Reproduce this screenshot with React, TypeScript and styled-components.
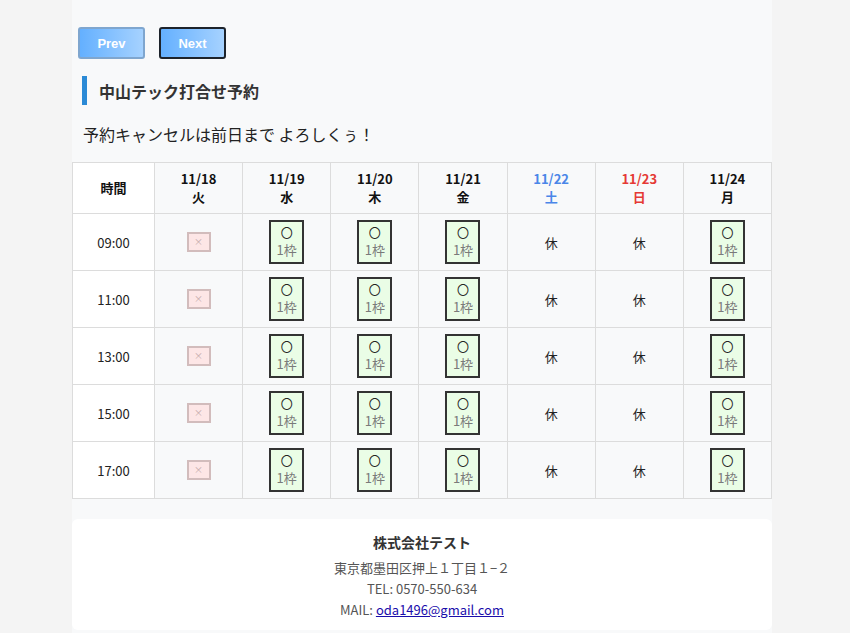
import React from "react"
import styled, { createGlobalStyle } from "styled-components"

const GlobalStyle = createGlobalStyle`
    body {
        margin: 0;
        background: #f4f4f4;
        font-family: "Noto Sans CJK JP", "Noto Sans", sans-serif;
        color: #222;
    }
`;

const Page = styled.div`
    width: 700px;
    margin-left: 72px;
    background: #f8f9fa;
    min-height: 633px;
    box-sizing: border-box;
    padding-top: 27px;
`;

const NavBar = styled.div`
    display: flex;
    gap: 14px;
    padding-left: 6px;
`;

const NavButton = styled.button<{ $active?: boolean }>`
    width: 67px;
    height: 32px;
    box-sizing: border-box;
    border-radius: 3px;
    border: 2px solid ${p => (p.$active ? "#1d232b" : "#7fa6cf")};
    background: linear-gradient(to right, #64b0ff, #a6d2ff);
    color: #fff;
    font-family: "Liberation Sans", Arial, sans-serif;
    font-weight: bold;
    font-size: 13px;
    padding: 0;
`;

const Heading = styled.h2`
    margin: 17px 0 0 10px;
    border-left: 5px solid #2b8ad6;
    padding-left: 12px;
    height: 29px;
    display: flex;
    align-items: center;
    font-size: 16px;
    font-weight: bold;
    color: #333;
`;

const Notice = styled.p`
    margin: 16px 0 0 11px;
    font-size: 16px;
    line-height: 26px;
    color: #222;
`;

const Table = styled.table`
    margin-top: 15px;
    width: 700px;
    border-collapse: collapse;
    table-layout: fixed;
`;

const HeadCell = styled.th<{ $color?: string }>`
    border: 1px solid #dcdcdc;
    height: 50px;
    font-size: 13px;
    line-height: 18px;
    font-weight: bold;
    color: ${p => p.$color || "#111"};
    background: #f8f9fa;
    padding: 0;
`;

const TimeHead = styled(HeadCell)`
    width: 81px;
    background: #fff;
`;

const Cell = styled.td`
    border: 1px solid #dcdcdc;
    height: 56px;
    text-align: center;
    font-size: 13px;
    color: #222;
    background: #f8f9fa;
    padding: 0;
`;

const TimeCell = styled(Cell)`
    background: #fff;
`;

const SlotBox = styled.div`
    width: 35px;
    height: 44px;
    box-sizing: border-box;
    margin: 0 auto;
    border: 2px solid #333;
    background: #eafde6;
    display: flex;
    flex-direction: column;
    align-items: center;
    justify-content: center;
    color: #7a7a7a;
`;

const Circle = styled.span`
    color: #222;
    font-size: 12px;
    line-height: 15px;
`;

const Count = styled.span`
    font-size: 13px;
    line-height: 19px;
`;

const Closed = styled.div`
    width: 24px;
    height: 20px;
    box-sizing: border-box;
    margin: 0 auto;
    border: 2px solid #d2bcbc;
    background: #fde6e6;
    color: #c4a8a8;
    font-size: 9px;
    line-height: 16px;
    text-align: center;
`;

const Footer = styled.footer`
    margin-top: 20px;
    background: #fff;
    border-radius: 6px;
    padding: 13px 0 10px;
    text-align: center;
    color: #555;
    font-size: 13px;
    line-height: 21px;
`;

const Company = styled.div`
    font-weight: bold;
    font-size: 14px;
    color: #333;
    margin-bottom: 4px;
`;

const MailLink = styled.a`
    color: #1a0dab;
`;

const days = [
    { date: "11/18", wd: "火", color: "", type: "full" },
    { date: "11/19", wd: "水", color: "", type: "open" },
    { date: "11/20", wd: "木", color: "", type: "open" },
    { date: "11/21", wd: "金", color: "", type: "open" },
    { date: "11/22", wd: "土", color: "#4a86e8", type: "off" },
    { date: "11/23", wd: "日", color: "#e53935", type: "off" },
    { date: "11/24", wd: "月", color: "", type: "open" },
];

const times = ["09:00", "11:00", "13:00", "15:00", "17:00"];

function Slot({ type }: { type: string }) {
    if (type === "full") return <Closed>×</Closed>;
    if (type === "off") return <>休</>;
    return (
        <SlotBox>
            <Circle>〇</Circle>
            <Count>1枠</Count>
        </SlotBox>
    );
}

export default function App() {
    return (
        <>
            <GlobalStyle />
            <Page>
                <NavBar>
                    <NavButton>Prev</NavButton>
                    <NavButton $active>Next</NavButton>
                </NavBar>
                <Heading>中山テック打合せ予約</Heading>
                <Notice>予約キャンセルは前日まで よろしくぅ！</Notice>
                <Table>
                    <thead>
                        <tr>
                            <TimeHead>時間</TimeHead>
                            {days.map(d => (
                                <HeadCell key={d.date} $color={d.color}>
                                    {d.date}
                                    <br />
                                    {d.wd}
                                </HeadCell>
                            ))}
                        </tr>
                    </thead>
                    <tbody>
                        {times.map(t => (
                            <tr key={t}>
                                <TimeCell>{t}</TimeCell>
                                {days.map(d => (
                                    <Cell key={d.date}>
                                        <Slot type={d.type} />
                                    </Cell>
                                ))}
                            </tr>
                        ))}
                    </tbody>
                </Table>
                <Footer>
                    <Company>株式会社テスト</Company>
                    <div>東京都墨田区押上１丁目１−２</div>
                    <div>TEL: 0570-550-634</div>
                    <div>
                        MAIL: <MailLink href="#">oda1496@gmail.com</MailLink>
                    </div>
                </Footer>
            </Page>
        </>
    );
}
